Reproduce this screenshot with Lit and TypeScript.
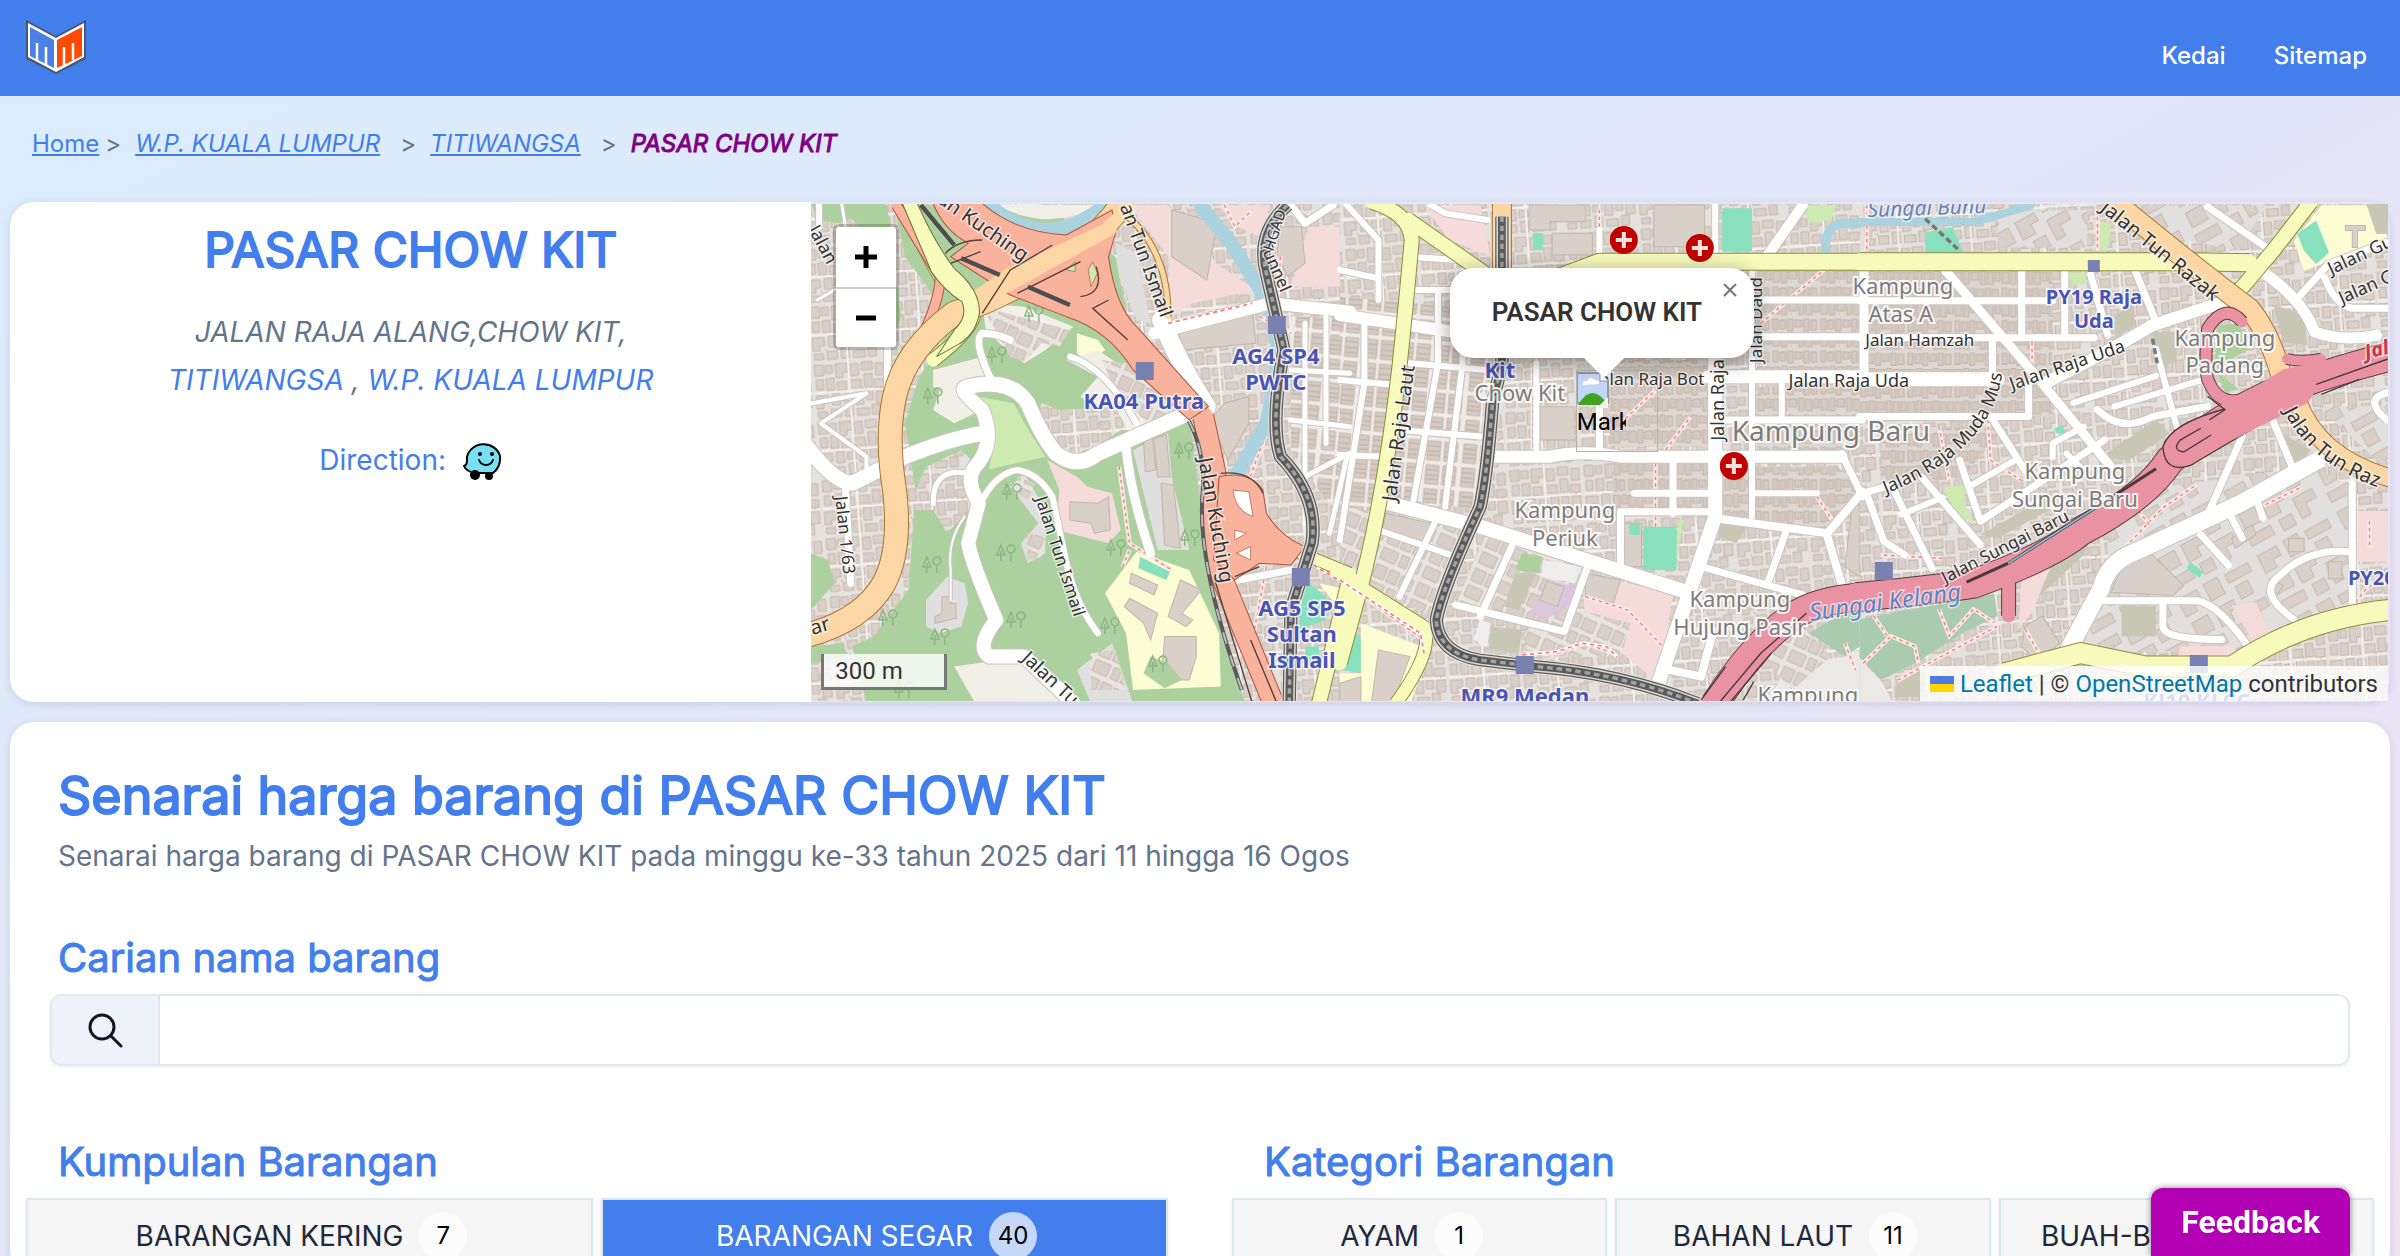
import { LitElement, html, svg, css } from "lit";
import { customElement } from "lit/decorators.js";

type Kind = "minor" | "yellow" | "orange" | "trunk" | "motorway" | "river";
type Road = [Kind, number, string];
type Area = [string, string];
interface Sheet {
  transform: string;
  areas: Area[];
  roads: Road[];
  rails: string[];
  lines: string[];
  paths: string[];
}

const casing: Record<Kind, string> = {
  minor: "#c9c6c2",
  yellow: "#8b8f3c",
  orange: "#a8762e",
  trunk: "#b0543c",
  motorway: "#5d3a42",
  river: "#aad3df",
};
const paint: Record<Kind, string> = {
  minor: "#ffffff",
  yellow: "#f6fabb",
  orange: "#fcd6a4",
  trunk: "#f9b29c",
  motorway: "#e892a2",
  river: "#aad3df",
};
const order: Kind[] = ["river", "minor", "yellow", "trunk", "orange", "motorway"];

const FOREST = "#add19e";
const PARK = "#cdebb0";
const LAND = "#f2efe9";
const GREY = "#e0dfdf";
const TEAL = "#88e0be";
const BUILDING = "#d9d0c9";
const SCHOOL = "#fdfdd4";
const HEALTH = "#f5dcdb";
const OLIVE = "#c8c7b3";

const west: Sheet = {
  transform: "translate(800 190) scale(.3508 .3333)",
  areas: [
    ["url(#houses)", "M0 0H1568V1560H0Z"],
    [FOREST, "M30 40H250L110 100L60 90ZM270 45H700L900 200L960 520L1110 680L1150 1000L1160 1160L1270 1540H190L150 1370L210 1340L310 1200L330 900L300 700L340 560L440 400L300 200Z"],
    [FOREST, "M110 45H250L270 250L290 380L250 470V300L180 120Z"],
    [FOREST, "M30 1090L80 1110L100 1180L30 1260ZM30 1370L120 1360L140 1400L30 1420Z"],
    [LAND, "M520 340L640 350L780 410L700 480L640 520L590 480L530 420Z"],
    [LAND, "M380 540L520 500L560 570L480 600L520 660L440 700L380 660L400 600L380 590Z"],
    ["url(#slant)", "M520 350L770 420L740 470L690 460L640 515L600 500Z"],
    [SCHOOL, "M790 430L850 450L870 480L820 520L790 490Z"],
    [LAND, "M850 480L960 560L1110 660L980 720L900 720L860 660L800 620L850 560L760 510Z"],
    ["url(#slant)", "M860 510L930 520L1090 650L990 700L900 600Z"],
    ["url(#houses)", "M690 640L740 660L900 650L930 710L800 800L700 770L670 680Z"],
    ["url(#houses)", "M360 830L460 780L510 830L480 870L500 940L420 1030L380 960L320 960L330 900Z"],
    [PARK, "M510 620L610 640L640 700L700 800L540 838L555 740Z"],
    [HEALTH, "M705 810L790 860L820 890L890 910L915 1020L880 1060L730 1020L740 900Z"],
    [BUILDING, "M770 935L850 940L880 920L885 1020L840 1030L830 1000L770 990Z"],
    [GREY, "M640 850L700 960L700 1090L650 1120L630 1060L680 1000L600 890Z"],
    ["url(#slant)", "M645 1030L700 1040L690 1100L650 1110ZM620 860L670 880L650 930L620 910Z"],
    [GREY, "M420 1160L470 1180L480 1240L460 1310L400 1330L360 1310L360 1230Z"],
    [BUILDING, "M405 1220H430V1240H445V1285L385 1300V1280L405 1270Z"],
    [GREY, "M950 780L1050 730L1060 860L1110 1080L1020 1080Z"],
    [BUILDING, "M980 755L1005 745L1015 840L985 845ZM1010 745L1045 735L1055 860L1020 860ZM1030 880L1065 885L1085 1075L1040 1065Z"],
    [SCHOOL, "M960 1085L1110 1140L1195 1330L1200 1490L950 1500L930 1330L870 1210Z"],
    [TEAL, "M970 1100L1055 1145L1045 1170L965 1135Z"],
    [BUILDING, "M945 1150L1020 1185L1010 1215L940 1180ZM1085 1170L1145 1200L1090 1270L1120 1290L1100 1310L1050 1280ZM940 1225L1020 1270L1000 1350L980 1300L925 1250ZM1040 1340H1130V1400L1110 1470H1030Z"],
    [FOREST, "M1000 1400L1050 1420L1090 1470L1040 1495L980 1450Z"],
    [LAND, "M440 1430L640 1400L700 1450L780 1540H500Z"],
    [GREY, "M790 1440L890 1360L950 1540H830Z"],
    ["url(#slant)", "M830 1390L900 1380L930 1500H830Z"],
    [LAND, "M560 45H850Q710 130 560 45Z"],
    [GREY, "M900 160L960 190L1000 400L960 390L910 260Z"],
    [HEALTH, "M940 45H1050L1100 160L1300 300L1120 340L1060 380L1050 200Z"],
    [BUILDING, "M1060 60L1190 100L1160 270L1060 200ZM1080 430L1290 360L1300 460L1090 480ZM1210 640L1280 620V700L1220 810L1170 690Z"],
    [HEALTH, "M1190 45H1340L1310 140L1250 110Z"],
    [HEALTH, "M1450 110H1560V290H1400Z"],
    [BUILDING, "M1370 110L1430 110L1440 220L1390 260L1360 190Z"],
    ["url(#terrace)", "M1400 380H1568V1010L1480 900L1400 780Z"],
    [TEAL, "M1440 1170L1500 1220V1290L1420 1320ZM1530 1350H1568V1480L1530 1400ZM1440 1370H1480V1420H1440Z"],
    [SCHOOL, "M1480 1180L1568 1200V1300Z"],
  ],
  roads: [
    ["river", 11, "M530 35Q700 200 880 35"],
    ["river", 12, "M1140 45L1230 160L1330 330Q1390 440 1330 700L1220 900"],
    ["minor", 6, "M55 45V110"],
    ["minor", 7, "M250 460V640"],
    ["minor", 15, "M20 770Q100 880 150 880L300 800Q430 745 520 730"],
    ["minor", 7, "M130 890L145 1180"],
    ["minor", 14, "M480 590Q440 590 520 660Q560 760 500 830Q470 870 510 940L480 1060Q490 1120 560 1290Q500 1370 540 1400H640L780 1540"],
    ["minor", 15, "M480 590Q600 560 650 640Q690 740 730 790Q790 840 850 790L1150 650"],
    ["minor", 7, "M550 580Q490 450 520 430Q560 430 600 450"],
    ["minor", 6, "M520 930Q560 850 620 840Q680 850 720 920L760 1120Q790 1250 850 1330"],
    ["minor", 9, "M930 770Q940 900 1000 1090"],
    ["minor", 6, "M770 500Q870 530 960 700"],
    ["minor", 5, "M380 940Q380 830 480 850"],
    ["minor", 2, "M470 980Q420 1050 430 1140V1230"],
    ["minor", 4, "M35 640L190 610L60 700L190 800V850"],
    ["minor", 3, "M120 45L130 110L210 230L50 330"],
    ["minor", 18, "M1030 390Q1080 520 1160 650"],
    ["minor", 12, "M1010 430L1340 340L1568 365"],
    ["minor", 5, "M1440 400V1000M1500 380V760M1400 540L1568 550M1400 690L1568 710M1440 860L1568 790M1560 800L1510 1030"],
    ["minor", 7, "M1400 45L1440 100L1520 45M1250 1170L1400 1140"],
    ["trunk", 9, "M275 45L400 260Q400 330 340 460"],
    ["trunk", 20, "M1150 680L1185 850Q1150 1000 1210 1180L1350 1540"],
    ["orange", 23, "M25 1335Q180 1290 240 1180Q290 1080 270 900Q245 740 270 620Q300 480 440 370Q560 330 700 240Q840 160 920 40"],
    ["orange", 5, "M890 45Q1050 150 1050 380"],
    ["yellow", 13, "M300 35Q350 170 400 260Q500 320 495 380Q480 430 380 510"],
    ["yellow", 11, "M1370 1065L1568 1150"],
    ["yellow", 14, "M1568 1160L1480 1540"],
  ],
  rails: [
    "M1390 45Q1300 130 1330 250L1380 480Q1340 700 1370 800Q1480 920 1460 1060L1400 1260L1395 1540",
  ],
  lines: [
    "M345 45L440 165M460 210L570 255M650 290L770 345",
    "M1110 690Q1150 780 1150 900Q1130 1100 1260 1500",
  ],
  paths: [
    "M1050 400L1190 360L1310 335M910 830L940 1060L1060 1140M1370 200L1340 700L1270 900M1470 1120L1568 1190M1310 380L1400 430",
    "M920 1130L940 1080M1330 1130L1290 1350M1210 45L1240 110L1290 60",
  ],
};

const centre: Sheet = {
  transform: "translate(1340 190) scale(.3508 .3333)",
  areas: [
    ["url(#houses)", "M0 0H1482V1560H0Z"],
    ["url(#terrace)", "M0 320L430 360L400 960L130 920L0 1150Z"],
    ["url(#slant)", "M0 950L380 1000L260 1280L0 1150ZM420 1010L700 1120L640 1320L330 1250Z"],
    ["url(#block)", "M780 820H1050V960H780ZM1080 830H1420L1480 900L1380 1020L1080 970ZM770 510H1060V770H770ZM1190 590H1482V780H1190ZM1190 240H1482V540H1190Z"],
    [HEALTH, "M240 45H400L430 200L310 150ZM690 1150L950 1210L910 1480L700 1300Z"],
    [BUILDING, "M540 45H700V95H600V120H540ZM605 130H720V195H605ZM895 45H1040V170H895ZM570 650H670V750H570ZM700 1150L800 1170L780 1240L700 1220ZM800 1000H860V1130H800ZM130 970L260 1000L240 1060L120 1030Z"],
    [TEAL, "M1090 55H1175V185H1090ZM865 1010H960V1140H865ZM825 1000H855V1035H825ZM30 1310L78 1370L60 1450L8 1440ZM550 130H580V180H550Z"],
    [PARK, "M1320 45H1415L1400 90L1340 100ZM965 990H980L960 1110Z"],
    ["#dcc6dd", "M600 1170L670 1190L640 1310L540 1270Z"],
    [BUILDING, "M590 1175L640 1190L620 1250L570 1230Z"],
    [FOREST, "M520 1090L575 1100L570 1150L500 1140Z"],
    [OLIVE, "M430 1310L520 1320L510 1390L425 1380ZM500 1150H560L510 1260L470 1250ZM1085 1000L1160 1010L1130 1060L1080 1040Z"],
    ["#eeeeee", "M580 1110L690 1130L670 1180L575 1160ZM400 1290L430 1300L420 1370L380 1350Z"],
    ["url(#slant)", "M650 1250L830 1300L800 1400L540 1400L520 1330Z"],
    [SCHOOL, "M60 1300L260 1380L200 1540H0V1450L60 1450Z"],
    [BUILDING, "M110 1380L200 1400L150 1540H90ZM0 1480L60 1460V1540H0ZM1460 950L1482 940V1160L1440 1130Z"],
    ["#aacbaf", "M1340 1330Q1420 1270 1482 1265V1370L1440 1400Z"],
    ["#ebe9e6", "M1440 1400L1482 1380V1540H1200L1300 1420Z"],
    ["url(#slant)", "M1200 1400L1300 1290L1400 1400L1290 1500Z"],
  ],
  roads: [
    ["minor", 12, "M0 375L320 425"],
    ["minor", 6, "M20 45L110 150V330M0 240L110 265M200 200L330 210M205 300H420M200 520L420 540M170 720L410 740M0 570L160 585"],
    ["minor", 6, "M0 795L130 800M280 300V520L210 930M350 360V520L300 950M70 400V580L0 1050M110 1020L330 1100M270 1000L170 1220M260 45L300 70L420 90"],
    ["minor", 14, "M140 940L400 1010L1000 1210"],
    ["minor", 7, "M330 1245L640 1325L710 1120M490 1070L400 1280M740 645V780M840 910H1060M950 810V970M800 1120V965H1060"],
    ["minor", 12, "M445 800H600Q690 780 800 800H1430"],
    ["minor", 14, "M1070 490V980L905 1490"],
    ["minor", 6, "M1175 250V980M1070 45V190M1260 580V690M1180 910H1360M1490 240V540M560 520V780M740 120V240"],
    ["minor", 13, "M1050 560H1490"],
    ["minor", 7, "M1200 330H1490M1210 440H1490M1060 690H1490M1430 790L1490 920M1270 1030L1220 1180M1030 1130L1320 1215"],
    ["minor", 10, "M1220 195L1320 45"],
    ["minor", 8, "M1070 985L1390 1030L1490 905M1390 1040L1430 1180M940 1440L1030 1460L1060 1340"],
    ["river", 7, "M1385 185Q1380 110 1430 100H1490"],
    ["yellow", 14, "M90 35Q200 70 205 150Q190 330 170 530Q130 900 60 1190L0 1420"],
    ["yellow", 14, "M195 90L440 270"],
    ["yellow", 16, "M600 270L740 215H1490"],
    ["yellow", 12, "M-10 1145L240 1310Q270 1380 160 1540"],
    ["orange", 18, "M462 30V250"],
    ["motorway", 27, "M1070 1540Q1180 1360 1290 1280Q1360 1230 1490 1220"],
  ],
  rails: [
    "M462 80V520L435 640Q420 850 400 950Q290 1200 275 1290Q280 1390 400 1410L560 1430Q800 1450 1020 1540",
  ],
  lines: ["M1090 1530L1240 1345M1030 1530L1100 1430"],
  paths: [
    "M0 1170L240 1350L220 1390M550 520V780M520 1390H620L700 1360L780 1390M900 1010V820L1000 680M1200 400L1380 240M740 60V200",
    "M1360 920L1410 1000M1440 1360L1470 1440M700 1220L820 1260L930 1380M800 700L900 600",
  ],
};

const east: Sheet = {
  transform: "translate(1860 190) scale(.3444 .338)",
  areas: [
    ["url(#houses)", "M0 0H1568V1568H0Z"],
    ["url(#block)", "M0 240H560V670H0ZM60 700H420L300 850L60 880Z"],
    ["url(#lots)", "M720 900L1320 820L1430 880V1230L1200 1360L640 1370L720 1160Z"],
    ["url(#lots)", "M760 45H1180L1100 180L820 120ZM400 60H660V170H400ZM1330 640H1568V860Z"],
    [SCHOOL, "M1340 45H1480L1533 140L1290 240L1260 150Z"],
    [OLIVE, "M1470 40H1540V130H1500ZM700 790L860 680L900 720L780 800ZM850 420H920V510L870 520ZM1200 340L1290 370L1300 460L1230 450ZM740 370L790 340L800 400L740 440ZM470 1160L680 1010L650 1080L480 1240ZM1230 720L1310 770L1270 820ZM350 1020L560 900L580 930L400 1030ZM760 1230H860V1320H760ZM100 1470L190 1410V1500H100Z"],
    [TEAL, "M1270 130L1325 90L1362 185L1325 220L1290 180ZM190 125L270 110L300 185H190ZM960 1100L998 1130L985 1148L950 1118ZM565 705L590 695L595 720H570ZM265 900L300 890L295 930H275Z"],
    [PARK, "M600 245H660L650 280H620ZM240 880L310 870L300 920L330 980L290 970ZM690 90L730 100L720 180H700Z"],
    [BUILDING, "M1410 105H1468V120H1445V170H1430V120H1410ZM770 1090L850 1080L940 1170L910 1200L730 1190ZM1080 1030L1140 990L1150 1020L1090 1060ZM1245 1030H1290V1070H1245ZM1360 1100H1400V1150H1360ZM1190 1150L1230 1170L1210 1200L1180 1190ZM480 1290L530 1260L580 1340L520 1400L470 1350Z"],
    [HEALTH, "M930 1350H1090V1400L1020 1420L920 1400ZM1080 1230L1150 1220L1200 1330L1150 1350Z"],
    [HEALTH, "M1440 950H1533V1100H1440ZM470 1150L560 1100L500 1250L460 1300Z"],
    ["#aacbaf", "M0 1270L230 1225L390 1195L400 1260L300 1310L160 1400L60 1450L0 1380Z"],
    ["#ebe9e6", "M0 1390L60 1450L110 1540H0Z"],
    [FOREST, "M1040 400L1100 395L1130 470L1080 500L1040 540L1100 590L1060 600L1030 520Z"],
  ],
  roads: [
    ["river", 6, "M0 95H330L500 45"],
    ["minor", 14, "M0 560H400"],
    ["minor", 7, "M0 328H560M0 437H680M470 240V430M595 240V430M15 240V540M385 440V560M0 670H490V580"],
    ["minor", 9, "M250 240L520 560L725 815"],
    ["minor", 12, "M540 570Q720 480 850 400L1060 330"],
    ["minor", 7, "M800 240L860 390M670 250L720 430M380 670L480 830M0 900L100 870M20 900L70 1040L130 1080M100 890L210 1120M180 850L350 1050M290 800L350 980L710 740"],
    ["minor", 6, "M330 870L450 800M120 960L240 910M560 790V750L650 700M600 780L650 830M620 630L860 550M740 640L1000 560M860 470L920 700"],
    ["minor", 7, "M690 650Q760 720 850 670L1010 640M1010 960L1110 730M1190 660L1260 830"],
    ["minor", 11, "M1180 250Q1290 330 1320 420Q1400 450 1500 430"],
    ["minor", 7, "M1280 310L1360 220L1568 140M1350 260Q1380 340 1430 350H1568M1010 50L1180 170"],
    ["minor", 17, "M590 1390L700 1180Q720 1100 800 1070L1100 930L1330 800"],
    ["minor", 7, "M700 1215H980Q1050 1230 1140 1370M880 1220V1290Q880 1330 1050 1330M1430 870V1220M1260 1270Q1150 1190 1220 1140Q1300 1060 1420 1070M990 1020L1070 1110M1150 910L1170 970M1080 970L1110 1030M1530 600Q1460 620 1530 680"],
    ["yellow", 17, "M0 212H960L1130 215"],
    ["yellow", 14, "M1100 300L1200 180L1310 35"],
    ["yellow", 20, "M420 1430L640 1370L830 1410H1080Q1300 1260 1568 1240"],
    ["orange", 20, "M740 35Q960 220 1130 350Q1190 420 1230 570"],
    ["orange", 17, "M1270 620Q1330 800 1568 860"],
    ["motorway", 11, "M1110 390Q1060 330 1010 410Q1000 520 1010 560Q1040 640 1110 620"],
    ["motorway", 13, "M432 1150V1260"],
    ["motorway", 28, "M-10 1205Q240 1180 330 1165Q560 1080 640 1010Q830 910 900 800Q1000 700 1180 610Q1350 540 1568 485"],
    ["motorway", 10, "M1240 500Q1280 510 1340 500"],
  ],
  rails: [],
  lines: ["M310 1160L400 1120L680 935M780 880L860 825", "M1380 630L1450 590M190 90L290 180"],
  paths: [
    "M10 1400L90 1320L160 1350L170 1400M40 1260L80 1320M230 1240L260 1320L330 1240L390 1280M20 45V180M690 60V180M370 660L380 800L470 860M730 1100L880 940L980 870",
    "M1440 900V1040M1480 980V1060M230 700L260 860M500 430V560M1440 1220L1470 1180L1530 1140M480 1300L560 1440M110 1450L400 1290M240 1090L60 1080M1160 940L1280 880M840 990L810 950",
  ],
};

const sheets = [west, centre, east];

type Label = [string, string, number, number, number, number];
const labels: Label[] = [
  ["station", "KA04 Putra", 1144, 400, 0, 22],
  ["station", "AG4 SP4", 1276, 355, 0, 22],
  ["station", "PWTC", 1276, 381, 0, 22],
  ["station", "AG5 SP5", 1302, 607, 0, 22],
  ["station", "Sultan", 1302, 633, 0, 22],
  ["station", "Ismail", 1302, 659, 0, 22],
  ["station", "Kit", 1500, 369, 0, 22],
  ["station", "MR9 Medan", 1525, 695, 0, 22],
  ["station", "PY19 Raja", 2094, 296, 0, 20],
  ["station", "Uda", 2094, 320, 0, 20],
  ["station", "PY20", 2372, 577, 0, 20],
  ["station", "KJ10 KLCC", 2197, 700, 0, 22],
  ["place", "Chow Kit", 1520, 392, 0, 22],
  ["place", "Kampung Baru", 1831, 430, 0, 28],
  ["place", "Kampung", 1565, 509, 0, 22],
  ["place", "Periuk", 1565, 537, 0, 22],
  ["place", "Kampung", 1740, 598, 0, 22],
  ["place", "Hujung Pasir", 1740, 626, 0, 22],
  ["place", "Kampung", 1808, 694, 0, 22],
  ["place", "Kampung", 1903, 285, 0, 22],
  ["place", "Atas A", 1901, 313, 0, 22],
  ["place", "Kampung", 2225, 337, 0, 22],
  ["place", "Padang", 2225, 364, 0, 22],
  ["place", "Kampung", 2075, 470, 0, 22],
  ["place", "Sungai Baru", 2075, 498, 0, 22],
  ["street", "Jalan Kuching", 1217, 520, 80, 20],
  ["street", "an Kuching", 984, 226, 35, 20],
  ["street", "an Tun Ismail", 1147, 260, 70, 19],
  ["street", "Jalan Tun Ismail", 1061, 556, 72, 17],
  ["street", "Jalan 1/63", 846, 535, 84, 17],
  ["street", "Jalan Tu", 1051, 678, 43, 19],
  ["street", "ar", 820, 625, -16, 20],
  ["street", "Jalan", 824, 244, 62, 18],
  ["street", "Tunnel", 1276, 266, 66, 17],
  ["street", "HGAD", 1274, 230, -72, 15],
  ["street", "Jalan Raja Laut", 1398, 433, -82, 20],
  ["street", "Jalan Raja Bot", 1650, 378, 0, 17],
  ["street", "Jalan Raja", 1717, 400, -90, 18],
  ["street", "Jalan Daud", 1756, 320, -90, 17],
  ["street", "Jalan Raja Uda", 1849, 380, 0, 18],
  ["street", "Jalan Hamzah", 1920, 339, 0, 17],
  ["street", "Jalan Raja Uda", 2067, 364, -19, 18],
  ["street", "Jalan Tun Razak", 2161, 250, 39, 20],
  ["street", "Jalan Gu", 2360, 254, -25, 18],
  ["street", "Jalan G", 2366, 286, -24, 18],
  ["street", "Jalan Sungai Baru", 2005, 546, -27, 17],
  ["water", "Sungai Kelang", 1885, 601, -8, 24],
  ["water", "Sungai Bunu", 1927, 207, -2, 21],
  ["ref", "Jalan", 2388, 346, -14, 20],
];

const stations = [[1145, 371], [1277, 325], [1301, 577], [1525, 665], [1884, 571], [2199, 664]];
const hospitals = [[1624, 240], [1700, 248], [1734, 466]];
const trees = [[997, 355], [933, 396], [1012, 492], [1006, 553], [1116, 548], [932, 565], [888, 618], [940, 637], [1016, 620], [1110, 626], [1184, 451], [1190, 538], [1034, 314], [904, 690], [1158, 664]];

const stroke = (kind: Kind, width: number, d: string, edge: boolean) =>
  svg`<path d=${d} fill="none" stroke-linejoin="round" stroke-linecap=${edge ? "butt" : "round"} vector-effect="non-scaling-stroke"
    stroke=${edge ? casing[kind] : paint[kind]} stroke-width=${edge ? width + 2 : width} />`;

const houseTile = svg`
  <pattern id="houses" width="74" height="58" patternUnits="userSpaceOnUse" patternTransform="scale(2.85 3) rotate(-4)">
    <rect width="74" height="58" fill="#e4e1de" />
    <g fill="#d9d0c9" stroke="#c6b8ad">
      <path d="M2 2h9v11h-9zM13 3h7v8h-7zM23 2h12v9h-5v5h-7zM38 3h8v12h-8zM49 2h11v8h-11zM63 4h8v12h-8zM3 17h7v10h-7zM13 16h8v12h-8zM24 20h9v9h-9zM36 19h12v8h-12zM51 14h8v13h-8zM61 20h10v8h-10zM2 33h12v8h-5v5h-7zM18 32h8v11h-8zM29 33h9v7h-9zM41 31h8v13h-8zM52 31h7v9h-7zM62 32h9v12h-9zM3 49h9v6h-9zM16 47h10v8h-10zM30 44h8v11h-8zM42 48h12v7h-12zM57 45h8v10h-8z" />
    </g>
    <path d="M0 30H72M36 0V58" stroke="#f3f1ee" stroke-width="2" />
    <path d="M48 29l4-6M14 44l3 5M66 30l5-5" stroke="#f2a09c" stroke-width="1" stroke-dasharray="3 3" />
  </pattern>
  <pattern id="slant" width="46" height="36" patternUnits="userSpaceOnUse" patternTransform="scale(2.85 3) rotate(24)">
    <rect width="46" height="36" fill="#e8e4e0" />
    <path fill="#d9d0c9" stroke="#c6b8ad" d="M2 2h12v13h-12zM17 2h10v13h-10zM30 3h13v12h-13zM2 20h16v12h-16zM22 20h8v12h-8zM33 20h10v12h-10z" />
  </pattern>
  <pattern id="terrace" width="36" height="24" patternUnits="userSpaceOnUse" patternTransform="scale(2.85 3) rotate(5)">
    <rect width="36" height="24" fill="#eeebe8" />
    <path fill="#d5cbc3" stroke="#c4b6ab" d="M2 2h13v5h-13zM2 7h13v5h-13zM2 12h13v4h-13zM2 16h13v5h-13zM19 2h13v4h-13zM19 6h13v6h-13zM19 12h13v5h-13zM19 17h13v4h-13z" />
  </pattern>
  <pattern id="block" width="48" height="32" patternUnits="userSpaceOnUse" patternTransform="scale(2.85 3)">
    <rect width="48" height="32" fill="#ddd8d4" />
    <path fill="#d5cac1" stroke="#c4b5a9" d="M1 1h5v11h-5zM8 2h6v9h-6zM16 1h5v12h-5zM23 2h7v7h-7zM32 1h5v12h-5zM39 2h6v10h-6zM1 17h7v11h-7zM10 16h5v13h-5zM17 17h8v8h-8zM27 16h5v13h-5zM34 17h6v12h-6zM42 17h5v9h-5z" />
  </pattern>
  <pattern id="lots" width="92" height="72" patternUnits="userSpaceOnUse" patternTransform="scale(2.85 3) rotate(-28)">
    <rect width="92" height="72" fill="#e2e0df" />
    <path fill="#d9d0c9" stroke="#c6b8ad" d="M4 5h22v10h-9v9h-13zM34 4h16v18h-16zM58 6h26v9h-26zM62 21h14v14h-14zM6 32h18v16h-18zM32 31h22v9h-8v10h-14zM4 56h26v10h-26zM40 56h14v12h-14zM62 44h22v10h-12v12h-10z" />
  </pattern>`;

const mapDrawing = html`<svg class="tiles" viewBox="811 204 1577 497" preserveAspectRatio="xMidYMid slice" role="img" aria-label="Street map of Chow Kit">
  <defs>
    ${houseTile}
    <path id="muda-musa" d="M1886 494Q1990 452 2002 376" />
    <path id="tun-razak-east" d="M2284 411Q2312 468 2392 492" />
  </defs>
  <g>
    ${sheets.map((s) => svg`<g transform=${s.transform}>
      ${s.areas.map(([fill, d]) => svg`<path d=${d} fill=${fill} stroke=${fill === BUILDING ? "#c4b6ab" : "none"} stroke-width="3" />`)}
      ${s.paths.map((d) => svg`<path d=${d} fill="none" stroke="#fbe9e7" stroke-width="12" /><path d=${d} fill="none" stroke="#f0817c" stroke-width="4" stroke-dasharray="10 10" />`)}
    </g>`)}
    ${trees.map(([x, y]) => svg`<path transform="translate(${x} ${y})" fill="none" stroke="#8fb585" stroke-width="1.5" d="M-5 8V-2M-9 2L-5 -8L-1 2ZM5 8V0M5 0a4 4 0 1 1 .1 0" />`)}
    ${order.map((kind) => svg`<g>
      ${[true, false].map((edge) => sheets.map((s) => svg`<g transform=${s.transform}>
        ${s.roads.filter((r) => r[0] === kind).map(([k, w, d]) => stroke(k, w, d, edge))}
      </g>`))}
    </g>`)}
    <g transform=${west.transform}>
      <path fill="#f9b29c" stroke="#b0543c" stroke-width="3" d="M380 40H520Q620 130 760 135L890 60L900 130L880 200Q900 350 960 410L1165 650L1110 690L950 540Q880 420 760 380L600 315L430 200L480 160Q410 120 380 40Z" />
      <path fill="#f9b29c" stroke="#b0543c" stroke-width="3" d="M1195 860Q1280 840 1320 900L1330 970Q1370 1040 1440 1070L1400 1125L1310 1120L1240 1170L1180 1110Z" />
      <path fill="#fff" stroke="#c98370" stroke-width="3" d="M1235 900L1280 905L1292 980Q1240 960 1235 900ZM1240 1020L1272 1030L1240 1050ZM1245 1090L1285 1070V1110Z" />
      <path fill="#fcd6a4" d="M430 350L590 235L860 105L925 40L900 130L720 235L520 350Z" />
      <path fill="#f6fabb" stroke="#6f7138" stroke-width="3" d="M292 40H335Q380 150 440 235Q515 300 512 370Q500 440 440 470L390 500L440 420Q480 380 462 335Q410 300 375 245Z" />
      <path fill="#cdebb0" stroke="#b0543c" stroke-width="2" d="M835 215L848 250L830 290L822 240ZM760 240L785 215V245Z" />
      <path fill="none" stroke="#54403c" stroke-width="4" d="M415 190Q450 150 520 150M430 220L515 185M520 370L600 240L720 165M620 310L800 215M845 230Q870 310 800 320M880 330L835 355L935 450M1285 1350L1360 1540M1180 1160L1290 1540M1240 1160L1310 1130M1200 850Q1290 840 1320 910" />
      <path fill="none" stroke="#4d4d4d" stroke-width="13" d="M345 45L440 165M460 205L570 255M650 290L770 345" />
      <path fill="none" stroke="#fff" stroke-width="7" d="M1050 400L1190 365L1290 340M1568 1190L1470 1130" />
      <path fill="none" stroke="#f0817c" stroke-width="5" stroke-dasharray="12 10" d="M1050 400L1190 365L1290 340M1568 1190L1470 1130" />
    </g>
    <g transform=${centre.transform}>
      <path fill="none" stroke="#4c3a3e" stroke-width="4" d="M1080 1540L1200 1390L1330 1270M1110 1540L1230 1390M1030 1530L1100 1430M1150 1530L1180 1475" />
      <path fill="none" stroke="#fff" stroke-width="10" d="M0 1170L230 1330L240 1390M520 1395L620 1385L690 1360L760 1370L790 1400" />
      <path fill="none" stroke="#f0817c" stroke-width="5" stroke-dasharray="12 10" d="M0 1170L230 1330L240 1390M520 1395L620 1385L690 1360L760 1370L790 1400" />
    </g>
    <g transform=${east.transform}>
      <path fill="#e892a2" stroke="#4c3a3e" stroke-width="4" d="M1070 645Q900 690 880 760Q885 840 960 815L1250 640L1200 580Z" />
      <path fill="#e892a2" d="M1060 640L1230 530L1380 500L1300 630L1040 760Z" />
      <path fill="none" stroke="#4c3a3e" stroke-width="4" d="M990 705L930 740Q905 770 940 775L1020 725M1015 680L1060 650L1010 610M1325 575L1533 500M1340 605L1450 560" />
      <path fill="none" stroke="#4c3a3e" stroke-width="9" d="M310 1160L430 1105L700 930L860 825" />
      <path fill="none" stroke="#86c4cf" stroke-width="5" d="M430 1105L700 930" />
      <path fill="none" stroke="#777" stroke-width="10" stroke-dasharray="18 10" d="M190 85L290 180M850 440L865 520" />
    </g>
    ${sheets.map((s) => svg`<g transform=${s.transform} fill="none">
      ${s.rails.map((d) => svg`
        <path d=${d} stroke="#e9e7e3" stroke-width="44" />
        <path d=${d} stroke="#5c5c5c" stroke-width="38" />
        <path d=${d} stroke="#d8d6d2" stroke-width="31" />
        <path d=${d} stroke="#5a5a5a" stroke-width="22" />
        <path d=${d} stroke="#a3a3a3" stroke-width="10" stroke-dasharray="16 11" />`)}
    </g>`)}
    <path d="M1189 421Q1205 450 1203 490Q1196 560 1242 690" fill="none" stroke="#5a5a5a" stroke-width="4" />
    <path d="M1189 421Q1205 450 1203 490Q1196 560 1242 690" fill="none" stroke="#bdbdbd" stroke-width="2" stroke-dasharray="12 12" />
    <g fill="#7981b0">
      ${stations.map(([x, y]) => svg`<rect x=${x - 9} y=${y - 9} width="18" height="18" />`)}
      <rect x="2088" y="260" width="12" height="12" />
    </g>
    ${hospitals.map(([x, y]) => svg`<g transform="translate(${x} ${y})"><circle r="14" fill="#bf0000" /><path d="M-8 0H8M0 -8V8" stroke="#f3e4e0" stroke-width="4" /></g>`)}
    ${labels.map(([kind, text, x, y, turn, size]) => svg`<text class="label ${kind}" font-size=${size} transform="translate(${x} ${y}) rotate(${turn})" text-anchor="middle" dominant-baseline="central">${text}</text>`)}
    <text class="label street" font-size="18"><textPath href="#muda-musa">Jalan Raja Muda Musa</textPath></text>
    <text class="label street" font-size="20"><textPath href="#tun-razak-east">Jalan Tun Raz</textPath></text>
  </g>
</svg>`;

const logo = html`<svg class="logo" viewBox="0 0 60 54" aria-hidden="true">
  <path d="M0 0L30 16L60 0V39L30 54L0 39Z" fill="#4a5672" />
  <path d="M2 3L30 18L58 3V37L30 52L2 37Z" fill="#fff" />
  <path d="M4 7L28 20V48L4 36Z" fill="#4a80e8" />
  <path d="M56 7L31 20V48L56 36Z" fill="#ff4a05" />
  <path d="M11 23V40M20 27V45M38 27V45M47 23V40" stroke="#fff" stroke-width="2.5" />
</svg>`;

const waze = html`<svg class="waze" viewBox="0 0 40 40" aria-hidden="true">
  <path d="M5 17A17 16 0 0 1 38 16Q39 27 31 33H12Q4 31 2 26Q5 25 5 21Z" fill="#78e0f5" stroke="#000" stroke-width="2" stroke-linejoin="round" />
  <circle cx="13" cy="35" r="5" /><circle cx="27" cy="36" r="4" />
  <circle cx="18" cy="14" r="2" /><circle cx="30" cy="14" r="2" />
  <path d="M17 20Q19 25 24 25Q29 25 31 20" fill="none" stroke="#000" stroke-width="2" stroke-linecap="round" />
</svg>`;

interface Option { name: string; count: number; active?: boolean }
const groups: Option[] = [
  { name: "BARANGAN KERING", count: 7 },
  { name: "BARANGAN SEGAR", count: 40, active: true },
];
const categories: Option[] = [
  { name: "AYAM", count: 1 },
  { name: "BAHAN LAUT", count: 11 },
  { name: "BUAH-BUAHAN", count: 6 },
];

@customElement("price-filter")
class PriceFilter extends LitElement {
  static properties = { heading: { type: String }, options: { attribute: false } };
  declare heading: string;
  declare options: Option[];

  static styles = css`
    :host { display: block; }
    h3 { margin: 0; padding: 0 32px; font-size: 40px; line-height: 48px; font-weight: 400; -webkit-text-stroke: 1px currentColor; color: #427eec; }
    .row { display: grid; grid-auto-flow: column; grid-auto-columns: minmax(0, 1fr); gap: 8px; margin-top: 12px; }
    .option {
      display: flex; align-items: center; justify-content: center; height: 76px; padding: 0;
      border: 2px solid #dfe7ee; background: #f6f6f6; color: #1e293b; font: 400 28px/40px Inter, sans-serif;
      white-space: nowrap; box-shadow: 0 1px 3px rgba(0, 0, 0, 0.1);
    }
    .active { background: #427eec; color: #fff; }
    .count {
      display: grid; place-items: center; width: 48px; height: 48px; margin: 0 16px; border-radius: 50%;
      background: rgba(255, 255, 255, 0.7); color: #000; font-size: 24px;
    }
  `;

  render() {
    return html`<h3>${this.heading}</h3>
      <div class="row">
        ${this.options.map((o) => html`<button class="option ${o.active ? "active" : ""}" type="button" aria-pressed=${o.active ? "true" : "false"}>
          ${o.name}<span class="count">${o.count}</span>
        </button>`)}
      </div>`;
  }
}

@customElement("store-map")
class StoreMap extends LitElement {
  static styles = css`
    :host { display: block; position: relative; overflow: hidden; background: #ddd; font-family: Roboto, sans-serif; font-size: 24px; color: #333; }
    .tiles { position: absolute; inset: 0; width: 100%; height: 100%; display: block; }
    .label { font-family: "Noto Sans", sans-serif; fill: #333; stroke: rgba(255, 255, 255, 0.6); stroke-width: 3px; paint-order: stroke; }
    .station { font-weight: 700; fill: #4a54b5; stroke: rgba(255, 255, 255, 0.8); }
    .place { fill: #7c7c7c; stroke: rgba(255, 255, 255, 0.85); stroke-width: 4px; }
    .water { font-style: italic; fill: #6083c4; }
    .ref { font-style: italic; font-weight: 700; fill: #c93650; }
    .zoom { position: absolute; left: 22px; top: 20px; width: 60px; border: 3px solid rgba(0, 0, 0, 0.2); border-radius: 6px; background: #fff padding-box; }
    .zoom button { display: block; width: 100%; height: 60px; padding: 0; border: 0; background: none; color: #000; }
    .zoom button + button { border-top: 2px solid #ccc; }
    .glyph { display: block; width: 24px; height: 24px; margin: 0 auto; }
    .scale { position: absolute; left: 10px; bottom: 11px; box-sizing: border-box; width: 126px; height: 36px; padding: 0 11px; border: 3px solid #777; border-top: 0; background: rgba(255, 255, 255, 0.8); line-height: 34px; }
    .credit { position: absolute; right: 0; bottom: 0; display: flex; align-items: center; gap: 6px; height: 35px; padding: 0 10px; background: rgba(255, 255, 255, 0.8); white-space: nowrap; }
    .credit a { color: #0078a8; text-decoration: none; }
    .flag { width: 24px; height: 16px; }
    .marker { position: absolute; left: calc(50% - 24px); top: 166px; box-sizing: border-box; width: 82px; height: 82px; border: 1px solid #b4b4b4; color: #000; }
    .broken { display: block; width: 32px; height: 37px; }
    .alt { display: block; width: 49px; overflow: hidden; line-height: 28px; white-space: nowrap; }
    .popup { position: absolute; left: calc(50% - 150px); top: 64px; box-sizing: border-box; width: 304px; height: 90px; padding: 0 42px; border-radius: 24px; background: #fff; box-shadow: 0 4px 20px rgba(0, 0, 0, 0.4); }
    .title { margin: 0; line-height: 88px; font-size: 26px; font-weight: 600; white-space: nowrap; }
    .close { position: absolute; right: 15px; top: 8px; width: 18px; height: 28px; padding: 0; border: 0; background: none; }
    .cross { display: block; width: 14px; height: 14px; margin: 0 auto; }
    .tip { position: absolute; left: 50%; top: 100%; width: 40px; height: 20px; margin-left: -18px; }
  `;

  render() {
    return html`${mapDrawing}
      <div class="marker">
        <svg class="broken" viewBox="0 0 32 37" aria-hidden="true">
          <path d="M0 2H23L31 10V32H0Z" fill="#c4d6f5" stroke="#979797" stroke-width="2" />
          <path d="M6 14Q5 10 10 10Q13 4 18 9Q22 9 22 13Z" fill="#fff" />
          <path d="M1 34Q15 10 31 34Z" fill="#42a320" />
          <path d="M20 37L31 26V37Z" fill="#f4f2ef" />
          <path d="M23 2V10H31" fill="#fff" stroke="#979797" />
        </svg>
        <span class="alt">Marker</span>
      </div>
      <div class="popup" role="dialog" aria-label="PASAR CHOW KIT">
        <p class="title">PASAR CHOW KIT</p>
        <button class="close" type="button" aria-label="Close popup">
          <svg class="cross" viewBox="0 0 14 14"><path d="M1 1L13 13M13 1L1 13" stroke="#757575" stroke-width="2" /></svg>
        </button>
        <svg class="tip" viewBox="0 0 40 20" aria-hidden="true"><path d="M0 0H40L22 18Q20 20 18 18Z" fill="#fff" /></svg>
      </div>
      <div class="zoom">
        <button type="button" aria-label="Zoom in"><svg class="glyph" viewBox="0 0 24 24"><path d="M1 12H23M12 1V23" stroke="#000" stroke-width="5" /></svg></button>
        <button type="button" aria-label="Zoom out"><svg class="glyph" viewBox="0 0 24 24"><path d="M2 12H22" stroke="#000" stroke-width="5" /></svg></button>
      </div>
      <div class="scale">300 m</div>
      <div class="credit">
        <svg class="flag" viewBox="0 0 24 16" aria-hidden="true"><path d="M0 0H24V8H0Z" fill="#4c7be1" /><path d="M0 8H24V16H0Z" fill="#ffd500" /></svg>
        <span><a href="#leaflet">Leaflet</a> | © <a href="#openstreetmap">OpenStreetMap</a> contributors</span>
      </div>`;
  }
}

@customElement("app-root")
class AppRoot extends LitElement {
  static styles = css`
    :host {
      display: block; height: 100vh; overflow: hidden; font-family: Inter, sans-serif; font-size: 24px; color: #64748b;
      background: linear-gradient(to bottom right, #d9edfe, #e3e6f8 50%, #efe2f5);
    }
    a { color: #427eec; text-decoration: none; }
    .bar { display: flex; justify-content: space-between; align-items: flex-start; height: 96px; padding: 0 33px 0 26px; box-sizing: border-box; background: #427eec; }
    .logo { display: block; width: 60px; height: 54px; margin-top: 20px; }
    .menu { display: flex; gap: 48px; margin-top: 36px; line-height: 40px; font-weight: 500; }
    .menu a { color: #fff; }
    .crumbs { display: flex; padding: 28px 32px 38px; margin: 0; list-style: none; line-height: 40px; }
    .crumbs a { text-decoration: underline; }
    .crumbs li { display: flex; }
    .sep { margin: 0 14px 0 20px; }
    .sep-first { margin: 0 14px 0 6px; }
    .here { color: #800080; -webkit-text-stroke: 1px currentColor; }
    .content { display: flex; flex-direction: column; gap: 20px; padding: 0 10px; }
    .store { display: grid; grid-template-columns: minmax(0, 1fr) minmax(0, 1.97fr); min-height: 500px; border-radius: 24px; box-shadow: 0 2px 8px rgba(100, 116, 139, 0.2); }
    .info { display: flex; flex-direction: column; align-items: center; padding-top: 18px; border-radius: 24px 0 0 24px; background: #fff; text-align: center; }
    .name, .lead h2 { margin: 0; line-height: 60px; font-weight: 400; -webkit-text-stroke: 2px currentColor; color: #427eec; }
    .name { font-size: 48px; }
    .address { margin: 28px 0 0; font-size: 28px; line-height: 48px; }
    .direction { display: flex; align-items: center; gap: 16px; margin-top: 32px; font-size: 28px; line-height: 48px; }
    .waze { width: 40px; height: 40px; }
    .where { margin: 2px 2px 1px 0; }
    .panel { padding: 44px 16px 0; border-radius: 24px; background: #fff; box-shadow: 0 2px 8px rgba(100, 116, 139, 0.2); }
    .lead { padding: 0 32px; }
    .lead h2 { font-size: 52px; }
    .lead p { margin: 8px 0 0; font-size: 28px; line-height: 44px; }
    .search { margin: 56px 24px 0; }
    .search label { display: block; padding: 0 8px; font-size: 40px; line-height: 48px; font-weight: 400; -webkit-text-stroke: 1px currentColor; color: #427eec; }
    .field { display: flex; height: 72px; margin-top: 12px; box-sizing: border-box; border: 2px solid #e2e8f0; border-radius: 12px; overflow: hidden; box-shadow: 0 1px 3px rgba(0, 0, 0, 0.08); }
    .go { display: grid; place-items: center; width: 108px; padding: 0; border: 0; border-right: 2px solid #e2e8f0; background: #eff3f9; }
    .lens { width: 36px; height: 36px; }
    .field input { flex: 1; min-width: 0; padding: 0 16px; border: 0; background: #fff; font: 400 28px Inter, sans-serif; }
    .filters { display: grid; grid-template-columns: repeat(2, minmax(0, 1fr)); gap: 64px; margin-top: 72px; }
    .feedback { position: fixed; right: 50px; bottom: 0; height: 68px; padding: 0 30px; border: 0; border-radius: 12px 12px 0 0; background: #b400b4; color: #fff; font: 700 32px/68px Roboto, sans-serif; box-shadow: 0 0 6px rgba(0, 0, 0, 0.5); }
  `;

  render() {
    return html`
      <header class="bar">
        <a href="#home" aria-label="Home">${logo}</a>
        <nav class="menu"><a href="#kedai">Kedai</a><a href="#sitemap">Sitemap</a></nav>
      </header>
      <ol class="crumbs">
        <li><a href="#home">Home</a><span class="sep-first">&gt;</span></li>
        <li><a href="#kl"><i>W.P. KUALA LUMPUR</i></a><span class="sep">&gt;</span></li>
        <li><a href="#titiwangsa"><i>TITIWANGSA</i></a><span class="sep">&gt;</span></li>
        <li class="here"><i>PASAR CHOW KIT</i></li>
      </ol>
      <main class="content">
        <section class="store">
          <div class="info">
            <h1 class="name">PASAR CHOW KIT</h1>
            <address class="address">JALAN RAJA ALANG,CHOW KIT,<br /><a href="#titiwangsa">TITIWANGSA</a> , <a href="#kl">W.P. KUALA LUMPUR</a></address>
            <a class="direction" href="#waze">Direction: ${waze}</a>
          </div>
          <store-map class="where"></store-map>
        </section>
        <section class="panel">
          <div class="lead">
            <h2>Senarai harga barang di PASAR CHOW KIT</h2>
            <p>Senarai harga barang di PASAR CHOW KIT pada minggu ke-33 tahun 2025 dari 11 hingga 16 Ogos</p>
          </div>
          <form class="search" @submit=${(e: Event) => e.preventDefault()}>
            <label for="item">Carian nama barang</label>
            <div class="field">
              <button class="go" type="submit" aria-label="Cari">
                <svg class="lens" viewBox="0 0 36 36" fill="none" stroke="#0f172a" stroke-width="3" stroke-linecap="round"><circle cx="15" cy="15" r="12" /><path d="M24 24L34 34" /></svg>
              </button>
              <input id="item" type="text" />
            </div>
          </form>
          <div class="filters">
            <price-filter .heading=${"Kumpulan Barangan"} .options=${groups}></price-filter>
            <price-filter .heading=${"Kategori Barangan"} .options=${categories}></price-filter>
          </div>
        </section>
      </main>
      <button class="feedback" type="button">Feedback</button>
    `;
  }
}
